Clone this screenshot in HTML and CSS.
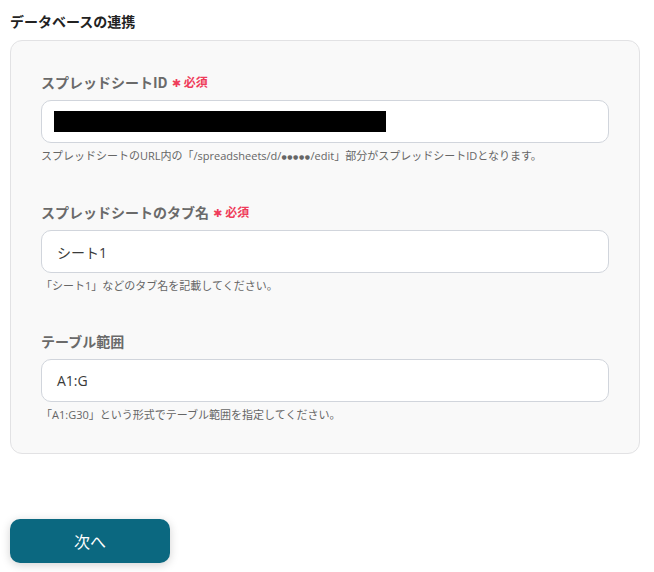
FILE: index.html
```
<!DOCTYPE html>
<html lang="ja">
<head>
<meta charset="utf-8">
<title>データベースの連携</title>
<link rel="stylesheet" href="styles.css">
</head>
<body>
<h2 class="title">データベースの連携</h2>
<div class="card">
  <div class="field">
    <div class="label">スプレッドシートID<span class="req"><span class="ast">✱</span>必須</span></div>
    <div class="input"><span class="redact"></span></div>
    <div class="hint">スプレッドシートのURL内の「/spreadsheets/d/<span class="dots">●●●●●</span>/edit」部分がスプレッドシートIDとなります。</div>
  </div>
  <div class="field">
    <div class="label">スプレッドシートのタブ名<span class="req"><span class="ast">✱</span>必須</span></div>
    <div class="input">シート1</div>
    <div class="hint">「シート1」などのタブ名を記載してください。</div>
  </div>
  <div class="field">
    <div class="label">テーブル範囲</div>
    <div class="input">A1:G</div>
    <div class="hint">「A1:G30」という形式でテーブル範囲を指定してください。</div>
  </div>
</div>
<div class="actions">
  <button class="next">次へ</button>
</div>
</body>
</html>
```
FILE: styles.css
```
* { box-sizing: border-box; }
html, body { margin: 0; background: #fff; }
body {
  padding: 10px;
  font-family: "Noto Sans CJK JP", "Noto Sans", sans-serif;
  color: #333;
}
.title {
  margin: 0 0 8px;
  font-size: 14px;
  line-height: 22px;
  font-weight: 700;
  color: #222;
}
.card {
  width: 630px;
  background: #f9f9f9;
  border: 1px solid #e2e2e4;
  border-radius: 12px;
  padding: 31px 30px 30px;
  display: flex;
  flex-direction: column;
  gap: 37px;
}
.field { display: flex; flex-direction: column; }
.label {
  font-size: 14px;
  line-height: 20px;
  font-weight: 700;
  color: #6a6a6a;
  display: flex;
  align-items: center;
}
.req {
  margin-left: 4px;
  font-size: 12px;
  font-weight: 700;
  color: #ef3c5a;
  display: inline-flex;
  align-items: center;
}
.ast {
  font-family: "DejaVu Sans", sans-serif;
  font-size: 11px;
  margin-right: 3px;
  line-height: 12px;
  position: relative;
  top: 2px;
}
.input {
  margin-top: 8px;
  height: 43px;
  background: #fff;
  border: 1px solid #d1d5dc;
  border-radius: 10px;
  padding: 0 15px 0 15px;
  display: flex;
  align-items: center;
  font-family: "Open Sans", "Noto Sans CJK JP", sans-serif;
  font-size: 14px;
  color: #3a3a3a;
}
.redact {
  display: block;
  width: 332px;
  height: 21px;
  background: #000;
  margin-left: -3px;
}
.hint {
  margin-top: 5px;
  font-family: "Open Sans", "Noto Sans CJK JP", sans-serif;
  font-size: 11px;
  line-height: 16px;
  color: #666;
}
.dots {
  font-family: "DejaVu Sans", sans-serif;
  font-size: 6px;
  letter-spacing: 0.6px;
  vertical-align: 1px;
}
.actions { margin-top: 65px; }
.next {
  width: 160px;
  height: 44px;
  border: none;
  border-radius: 10px;
  background: #0b6880;
  color: #fff;
  font-family: "Noto Sans CJK JP", sans-serif;
  font-size: 16px;
  box-shadow: 0 2px 10px rgba(0,0,0,0.18);
}
```
